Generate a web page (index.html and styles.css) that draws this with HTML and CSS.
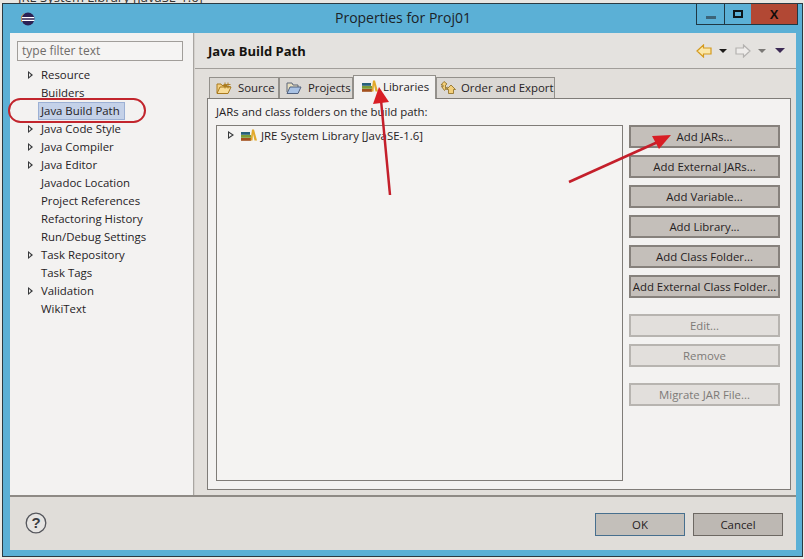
FILE: index.html
```html
<!DOCTYPE html>
<html lang="en">
<head>
<meta charset="utf-8">
<title>Properties for Proj01</title>
<link rel="stylesheet" href="styles.css">
</head>
<body>
<div class="screen">
  <div class="behind"><span>JRE System Library [JavaSE-1.6]</span></div>
  <div class="window">
    <div class="titlebar">
      <svg class="app-icon" width="14" height="14" viewBox="0 0 14 14"><circle cx="7" cy="7" r="6.5" fill="#2c2255"/><path d="M0.8 5.6h12.4M0.6 8.4h12.8" stroke="#fff" stroke-width="1.2"/><path d="M3 1.6A6.5 6.5 0 0 0 1 10" fill="none" stroke="#d08a3a" stroke-width="1"/></svg>
      <div class="title">Properties for Proj01</div>
      <div class="controls">
        <div class="ctl ctl-min"><i></i></div>
        <div class="ctl ctl-max"><i></i></div>
        <div class="ctl ctl-close">X</div>
      </div>
    </div>
    <div class="client">
      <div class="main">
        <aside class="side">
          <div class="filter">type filter text</div>
          <ul class="tree">
            <li class="node has-kids">Resource</li>
            <li class="node">Builders</li>
            <li class="node"><span class="selected">Java Build Path</span></li>
            <li class="node has-kids">Java Code Style</li>
            <li class="node has-kids">Java Compiler</li>
            <li class="node has-kids">Java Editor</li>
            <li class="node">Javadoc Location</li>
            <li class="node">Project References</li>
            <li class="node">Refactoring History</li>
            <li class="node">Run/Debug Settings</li>
            <li class="node has-kids">Task Repository</li>
            <li class="node">Task Tags</li>
            <li class="node has-kids">Validation</li>
            <li class="node">WikiText</li>
          </ul>
        </aside>
        <section class="page">
          <header class="page-head">
            <h1 class="page-title">Java Build Path</h1>
            <div class="nav">
              <svg width="16" height="14" viewBox="0 0 16 14"><path d="M1 7L7.500 1V4H15V10H7.500V13Z" fill="#fbe7a8" stroke="#d49a1e" stroke-width="1.200"/></svg>
              <span class="caret"></span>
              <svg class="nav-fwd" width="16" height="14" viewBox="0 0 16 14"><path d="M15 7L8.500 1V4H1V10H8.500V13Z" fill="#eeecea" stroke="#b4b2b0" stroke-width="1.200"/></svg>
              <span class="caret caret-off"></span>
              <span class="caret caret-menu"></span>
            </div>
          </header>
          <div class="tabs-area">
            <div class="tabs">
              <div class="tab tab-source">
                <svg width="16" height="14" viewBox="0 0 16 14"><path d="M1 12V3h4l1 1.500h5V6" fill="#f5d183" stroke="#a97a1e"/><path d="M1 12.500L4 6h11l-3 6.500Z" fill="#f8dc97" stroke="#a97a1e"/><path d="M9 1.500v6M12 1.500v6M7.500 3.500h7M7.500 5.500h7" stroke="#a97a1e" stroke-width=".9"/></svg>
                Source
              </div>
              <div class="tab tab-projects">
                <svg width="16" height="14" viewBox="0 0 16 14"><path d="M1 11V2h5l1 2h5v2" fill="#e8dfc0" stroke="#5d6678"/><path d="M1 12.500L4 6h11l-3 6.500Z" fill="#a9c2e4" stroke="#51617e"/></svg>
                Projects
              </div>
              <div class="tab tab-libs">
                <svg class="books" width="16" height="12" viewBox="0 0 16 12"><use href="#books"/></svg>
                Libraries
              </div>
              <div class="tab tab-order">
                <svg width="16" height="15" viewBox="0 0 16 15"><path d="M1 5L4 1.500 7 4 5.500 5V8.500L7.500 7 4.500 10.500 1.500 6.500 3 7V5Z" fill="#f3cf7a" stroke="#8a6a20" stroke-width=".8"/><path d="M6.500 9.500L11 5 15.500 9.500H13.500V13.500H8.500V9.500Z" fill="#f3cf7a" stroke="#8a6a20" stroke-width=".8"/></svg>
                Order and Export
              </div>
            </div>
            <div class="folder">
              <p class="caption">JARs and class folders on the build path:</p>
              <div class="panes">
                <div class="lib-tree">
                  <div class="lib-row">
                    <span class="twist"></span>
                    <svg class="books" width="16" height="12" viewBox="0 0 16 12"><use href="#books"/></svg>
                    JRE System Library [JavaSE-1.6]
                  </div>
                </div>
                <div class="buttons">
                  <div class="btn">Add JARs...</div>
                  <div class="btn">Add External JARs...</div>
                  <div class="btn">Add Variable...</div>
                  <div class="btn">Add Library...</div>
                  <div class="btn">Add Class Folder...</div>
                  <div class="btn">Add External Class Folder...</div>
                  <div class="btn btn-off gap-a">Edit...</div>
                  <div class="btn btn-off">Remove</div>
                  <div class="btn btn-off gap-b">Migrate JAR File...</div>
                </div>
              </div>
            </div>
          </div>
        </section>
      </div>
      <footer class="foot">
        <svg class="help" width="22" height="22" viewBox="0 0 22 22"><circle cx="11" cy="11" r="9.800" fill="#e6e4e2" stroke="#55565c" stroke-width="1.300"/><text x="11" y="16" text-anchor="middle" class="help-q">?</text></svg>
        <div class="actions">
          <div class="act act-ok">OK</div>
          <div class="act">Cancel</div>
        </div>
      </footer>
    </div>
  </div>
  <svg class="marks" width="804" height="559" viewBox="0 0 804 559">
    <rect x="9" y="99" width="136" height="23" rx="11.500" fill="none" stroke="#c2252d" stroke-width="2"/>
    <path d="M390 195L381 100" stroke="#c41f2b" stroke-width="2.500" fill="none"/>
    <path d="M379 87L373 104L389 102Z" fill="#d81e25"/>
    <path d="M569 182L660 141" stroke="#c41f2b" stroke-width="2.500" fill="none"/>
    <path d="M671 135L652 136L659 149Z" fill="#d81e25"/>
  </svg>
  <svg width="0" height="0" class="defs"><defs><g id="books"><rect x="0" y="3" width="9" height="2.800" fill="#27607a"/><rect x="0" y="6" width="10" height="2.800" fill="#7c9c36"/><rect x="0" y="9" width="10" height="2.800" fill="#a3511e"/><path d="M9.500 11.500L11 0.500h2l3 11h-2.500L12 5l-.5 6.500Z" fill="#e2a92b"/></g></defs></svg>
</div>
</body>
</html>
```

FILE: styles.css
```css
* { box-sizing: border-box; }
html, body { margin: 0; padding: 0; background: #eceae6; }
body { font-family: "Open Sans", "Noto Sans", sans-serif; font-size: 11.4px; color: #26221f; }
.screen { position: relative; width: 804px; height: 559px; overflow: hidden; }
.behind { height: 3px; overflow: hidden; padding-left: 18px; background: #e8e6e2; }
.behind span { display: block; margin-top: -11px; line-height: 16px; font-size: 13px; color: #333; }
.window {
  width: 801px; height: 554px; margin-left: 2px;
  border: 1px solid #2b3a42; background: #5bb0d6;
  display: flex; flex-direction: column;
  padding: 0 6px 6px 7px;
}
.titlebar { height: 29px; display: flex; align-items: center; position: relative; flex: none; }
.app-icon { margin-left: 11px; }
.title { position: absolute; left: 0; right: 0; top: 5px; text-align: center; font-size: 14px; line-height: 18px; color: #1c2327; }
.controls { position: absolute; top: 0; right: -2px; display: flex; height: 21px; border: 1px solid #1f3844; border-top: 0; }
.ctl { display: flex; align-items: center; justify-content: center; border-left: 1px solid #1f3844; width: 27px; }
.ctl:first-child { border-left: 0; }
.ctl-min i { display: block; width: 10px; height: 3px; margin-top: 6px; background: #3c6478; }
.ctl-max i { display: block; width: 10px; height: 8px; border: 2px solid #0d1519; }
.ctl-close { width: 46px; background: #b24834; color: #120d0b; font: bold 13px "Liberation Sans", sans-serif; border-left: 0; }
.client { flex: 1; display: flex; flex-direction: column; background: #e2dfdb; min-height: 0; }
.main { height: 464px; display: flex; border-bottom: 2px solid #8e8a85; flex: none; }
.side { width: 184px; flex: none; background: #f3f2f1; border-right: 1px solid #a9a6a2; padding: 8px 0 0 7px; }
.filter { width: 166px; height: 20px; border: 1px solid #a19e9a; padding-left: 4px; line-height: 17px; font-size: 12px; color: #6f6c69; background: #f5f4f3; }
.tree { list-style: none; margin: 5px 0 0; padding: 0; }
.node { position: relative; height: 18px; line-height: 18px; padding-left: 24px; white-space: nowrap; }
.has-kids::after {
  content: ""; position: absolute; left: 11px; top: 5px;
  border-left: 5px solid #37393b; border-top: 4px solid transparent; border-bottom: 4px solid transparent;
}
.has-kids::before {
  content: ""; position: absolute; z-index: 1; left: 12px; top: 7px; width: 2px; height: 4px;
  background: #f4f3f2; clip-path: polygon(0 0, 100% 50%, 0 100%);
}
.selected { display: inline-block; height: 18px; line-height: 16px; margin-left: -3px; padding: 0 2px; background: #c4d1e8; border: 1px solid #9cb0d4; width: 87px; }
.page { flex: 1; display: flex; flex-direction: column; border-left: 1px solid #d4d1cd; min-width: 0; }
.page-head { height: 36px; flex: none; display: flex; align-items: center; justify-content: space-between; border-bottom: 1px solid #a19e9a; background: #e4e2df; padding: 0 11px 0 13px; }
.page-title { margin: 0; font-size: 13px; font-weight: 700; color: #15130f; }
.nav { display: flex; align-items: center; }
.nav-fwd { margin-left: 8px; }
.caret { width: 0; height: 0; margin-left: 7px; border-left: 4px solid transparent; border-right: 4px solid transparent; border-top: 4px solid #1d1b19; }
.caret-off { border-top-color: #7b7976; margin-left: 7px; }
.caret-menu { border-left-width: 5px; border-right-width: 5px; border-top: 5px solid #3c2a55; margin-left: 9px; }
.tabs-area { flex: 1; padding: 5px 5px 5px 12px; display: flex; flex-direction: column; min-height: 0; }
.tabs { height: 24px; display: flex; align-items: flex-end; padding-left: 2px; position: relative; z-index: 1; flex: none; }
.tab {
  height: 21px; display: flex; align-items: center; gap: 6px; padding: 0 0 1px 6px;
  background: #dbd8d4; border: 1px solid #93908b; border-bottom: 0; white-space: nowrap;
}
.tab-source { width: 70px; }
.tab-projects { width: 74px; }
.tab-libs { width: 83px; height: 24px; margin-bottom: -1px; background: #f3f2f1; padding: 0 0 3px 8px; gap: 5px; }
.tab-order { width: 119px; padding-left: 3px; gap: 5px; }
.folder { flex: 1; border: 1px solid #7f7c78; background: #f3f2f1; padding: 4px 9px 8px 8px; display: flex; flex-direction: column; min-height: 0; }
.caption { margin: 0; height: 22px; line-height: 18px; }
.panes { flex: 1; display: flex; min-height: 0; }
.lib-tree { width: 407px; flex: none; border: 1px solid #7f7c78; background: #f4f3f2; padding: 0 0 0 11px; }
.lib-row { display: flex; align-items: center; height: 18px; white-space: nowrap; }
.twist { width: 6px; height: 8px; margin-right: 7px; background: #37393b; clip-path: polygon(0 0, 100% 50%, 0 100%, 0 0, 1px 2px, 1px 6px, 4px 4px, 1px 2px); }
.lib-row .books { margin-right: 4px; }
.buttons { width: 151px; margin-left: 6px; display: flex; flex-direction: column; gap: 7px; }
.btn { height: 23px; line-height: 19px; text-align: center; background: #c4bfba; border: 2px solid #86817c; white-space: nowrap; }
.btn-off { background: #e2dfdc; border-color: #b7b4b0; color: #7d7a77; }
.gap-a { margin-top: 9px; }
.gap-b { margin-top: 9px; }
.foot { flex: 1; display: flex; align-items: center; justify-content: space-between; padding: 0 13px 0 15px; background: #e0ddd9; }
.help { margin-top: -1px; }
.help-q { font: bold 15px "Liberation Sans", sans-serif; fill: #3c3d42; }
.actions { display: flex; gap: 8px; margin-top: 2px; }
.act { width: 90px; height: 23px; line-height: 21px; text-align: center; background: #bdb8b3; border: 1px solid #6d6863; }
.act-ok { background: #c3bfba; border-color: #476f8e; }
.marks { position: absolute; left: 0; top: 0; z-index: 5; pointer-events: none; }
.defs { position: absolute; }
```
